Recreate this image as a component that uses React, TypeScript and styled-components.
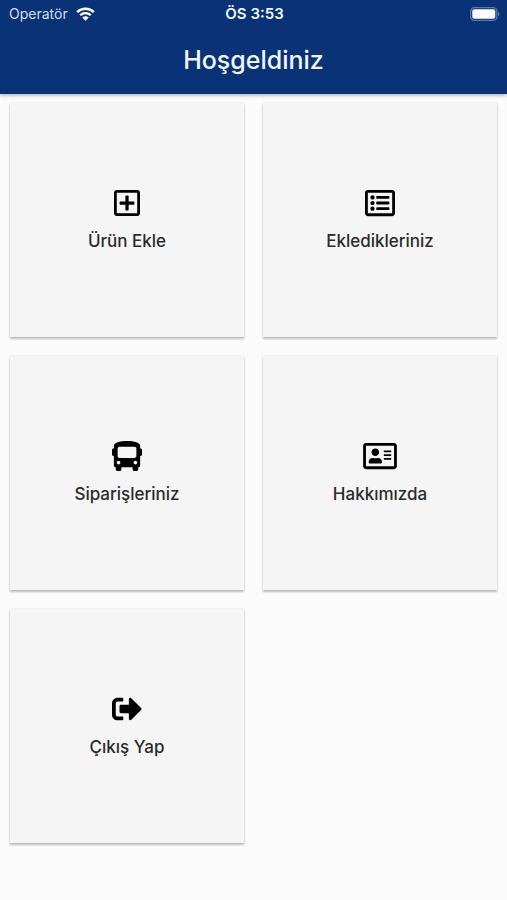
import React from "react";
import styled, { createGlobalStyle } from "styled-components";
import {
  FaBus,
  FaRegAddressCard,
  FaRegListAlt,
  FaRegPlusSquare,
  FaSignOutAlt,
} from "react-icons/fa";
import type { IconType } from "react-icons";

const GlobalStyle = createGlobalStyle`
  *, *::before, *::after { box-sizing: border-box; }
  body {
    margin: 0;
    background: #fbfbfb;
    color: #2b2b2b;
    font-family: Inter, "Liberation Sans", sans-serif;
  }
`;

const Header = styled.header`
  position: relative;
  height: 94px;
  background: #0a3377;
  color: #f1f6ff;
  box-shadow: 0 1px 4px rgba(0, 0, 0, 0.35);
`;

const StatusBar = styled.div`
  display: grid;
  grid-template-columns: 1fr auto 1fr;
  align-items: center;
  height: 28px;
  padding: 0 7px 0 9px;
  font-size: 14px;
  line-height: 20px;
`;

const Carrier = styled.div`
  display: flex;
  align-items: center;
  gap: 8px;
  color: #d5def0;
`;

const Clock = styled.time`
  font-size: 15px;
  font-weight: 600;
`;

const BatterySlot = styled.div`
  display: flex;
  justify-content: flex-end;
`;

const Title = styled.h1`
  margin: 0;
  padding-top: 16px;
  font-size: 25px;
  font-weight: 500;
  line-height: 32px;
  text-align: center;
`;

const Menu = styled.main`
  display: grid;
  grid-template-columns: repeat(2, minmax(0, 1fr));
  gap: 19px;
  padding: 9px 10px 56px;
`;

const Tile = styled.button<{ $iconWidth: number }>`
  display: flex;
  flex-direction: column;
  align-items: center;
  justify-content: center;
  gap: 13px;
  aspect-ratio: 1;
  padding: 0 0 2px;
  border: 0;
  background: #f5f5f5;
  box-shadow: 0 2px 2px rgba(0, 0, 0, 0.24), 0 0 2px rgba(0, 0, 0, 0.12);
  color: inherit;
  font: inherit;
  cursor: pointer;

  svg {
    width: ${({ $iconWidth }) => $iconWidth}px;
    height: 30px;
    color: #000;
  }
`;

const Label = styled.span`
  font-size: 17px;
  font-weight: 500;
  line-height: 20px;
`;

const WifiIcon = () => (
  <svg width="19" height="14" viewBox="0 0 19 14" fill="none" aria-hidden="true">
    <path d="M1.2 5.1a12 12 0 0 1 16.6 0" stroke="#fff" strokeWidth="2.4" />
    <path d="M4.2 8.2a7.6 7.6 0 0 1 10.6 0" stroke="#fff" strokeWidth="2.3" />
    <path d="M9.5 13.8 6.3 10.6a4.6 4.6 0 0 1 6.4 0Z" fill="#fff" />
  </svg>
);

const BatteryIcon = () => (
  <svg width="30" height="14" viewBox="0 0 30 14" role="img" aria-label="Pil">
    <rect x="0.7" y="0.7" width="26.2" height="12.6" rx="3.6" fill="none" stroke="#5f79aa" strokeWidth="1.3" />
    <rect x="2.3" y="2.3" width="23" height="9.4" rx="2" fill="#fff" />
    <path d="M28 4.8c2 .9 2 3.5 0 4.4Z" fill="#5f79aa" />
  </svg>
);

const items: { label: string; icon: IconType; iconWidth: number }[] = [
  { label: "Ürün Ekle", icon: FaRegPlusSquare, iconWidth: 26 },
  { label: "Ekledikleriniz", icon: FaRegListAlt, iconWidth: 30 },
  { label: "Siparişleriniz", icon: FaBus, iconWidth: 30 },
  { label: "Hakkımızda", icon: FaRegAddressCard, iconWidth: 34 },
  { label: "Çıkış Yap", icon: FaSignOutAlt, iconWidth: 30 },
];

export default function App() {
  return (
    <>
      <GlobalStyle />
      <Header>
        <StatusBar>
          <Carrier>
            Operatör
            <WifiIcon />
          </Carrier>
          <Clock>ÖS 3:53</Clock>
          <BatterySlot>
            <BatteryIcon />
          </BatterySlot>
        </StatusBar>
        <Title>Hoşgeldiniz</Title>
      </Header>
      <Menu>
        {items.map(({ label, icon: Icon, iconWidth }) => (
          <Tile key={label} type="button" $iconWidth={iconWidth}>
            <Icon aria-hidden="true" />
            <Label>{label}</Label>
          </Tile>
        ))}
      </Menu>
    </>
  );
}
